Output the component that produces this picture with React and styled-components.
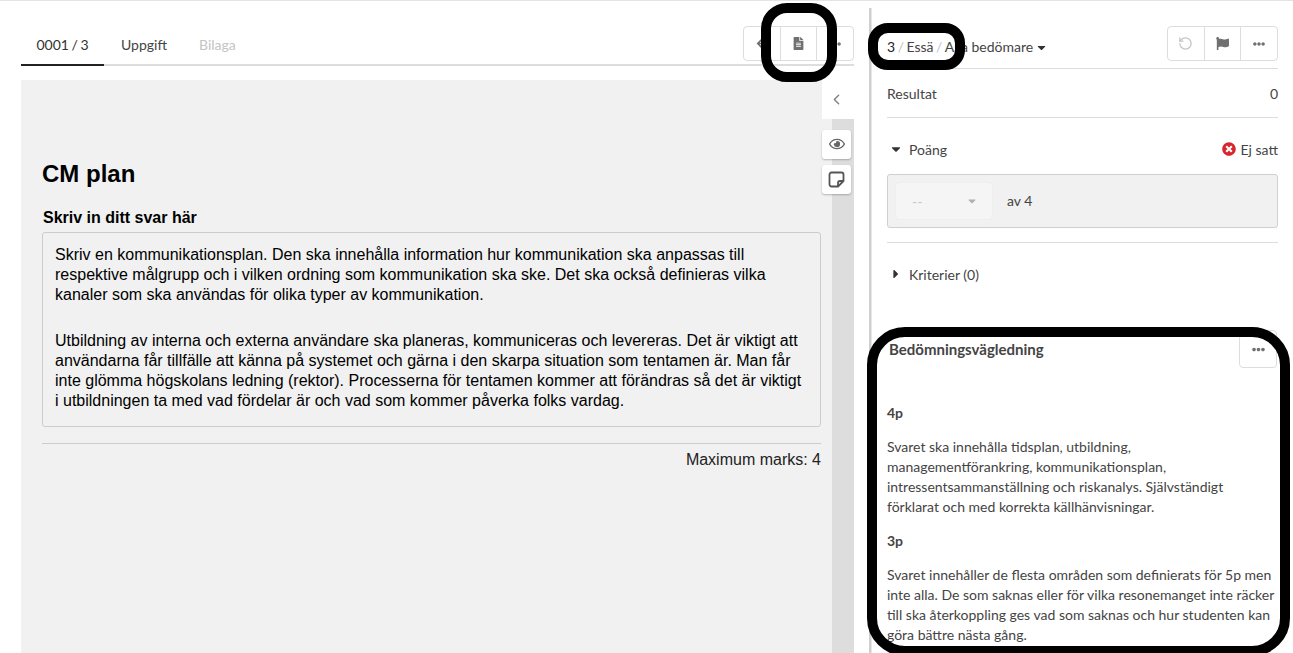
import styled, { createGlobalStyle } from "styled-components";
import {
  FaArrowLeft,
  FaCaretDown,
  FaCaretRight,
  FaEllipsisH,
  FaFileAlt,
  FaFlag,
  FaRegEye,
  FaTimesCircle,
} from "react-icons/fa";
import { ChevronLeft, RotateCcw } from "lucide-react";

const GlobalStyle = createGlobalStyle`
  html, body {
    margin: 0;
    padding: 0;
    background: #ffffff;
  }
  body {
    font-family: "Lato", "Liberation Sans", sans-serif;
    color: #444444;
    font-size: 14px;
  }
  * {
    box-sizing: border-box;
  }
`;

const Page = styled.div`
  position: relative;
  display: flex;
  width: 1293px;
  height: 653px;
  overflow: hidden;
  border-top: 1px solid #e4e4e4;
`;

// left side
const LeftColumn = styled.div`
  width: 833px;
  margin-left: 21px;
  flex-shrink: 0;
  display: flex;
  flex-direction: column;
`;

const TabBar = styled.div`
  display: flex;
  align-items: flex-start;
  justify-content: space-between;
  height: 65px;
  border-bottom: 2px solid #dddddd;
  padding-top: 25px;
`;

const Tabs = styled.div`
  display: flex;
`;

const Tab = styled.div`
  height: 40px;
  padding: 10px 16px 0 16px;
  line-height: 17px;
  font-size: 14px;
  white-space: nowrap;
  color: ${({ disabled }) => (disabled ? "#c4c4c4" : "#444444")};
  ${({ active }) =>
    active
      ? `
    width: 83px;
    margin-right: 1px;
    padding: 10px 0 0 0;
    color: #333333;
    border-bottom: 2px solid #222222;
    text-align: center;
    word-spacing: -1px;
  `
      : ""}
`;

const BtnGroup = styled.div`
  display: flex;
  width: 111px;
  height: 35px;
  border: 1px solid #dddddd;
  border-radius: 4px;
  background: #ffffff;
`;

const GroupBtn = styled.div`
  flex: 1;
  display: flex;
  align-items: center;
  justify-content: center;
  color: ${({ light }) => (light ? "#c4c4c4" : "#707070")};
  font-size: ${({ size }) => size || 13}px;
  & + & {
    border-left: 1px solid #dddddd;
  }
`;

const Workspace = styled.div`
  position: relative;
  flex: 1;
  display: flex;
  margin-top: 14px;
`;

const Paper = styled.div`
  width: 811px;
  background: #f1f1f1;
  padding: 79px 11px 0 21px;
  font-family: "Liberation Sans", Arial, sans-serif;
  color: #000000;
`;

const Rail = styled.div`
  flex: 1;
  margin-top: 39px;
  background: #dddddd;
`;

const PaperTitle = styled.h1`
  margin: 0;
  font-size: 24px;
  line-height: 30px;
  font-weight: 700;
`;

const QuestionLabel = styled.div`
  margin-top: 19px;
  font-size: 16px;
  line-height: 20px;
  font-weight: 700;
  padding-left: 1px;
`;

const AnswerBox = styled.div`
  margin-top: 4px;
  height: 195px;
  padding: 12px 12px 0 12px;
  border: 1px solid #cccccc;
  border-radius: 3px;
  font-size: 16px;
  line-height: 20px;
  & p {
    margin: 0 0 26px 0;
  }
`;

const MarksRow = styled.div`
  margin-top: 16px;
  padding-top: 6px;
  border-top: 1px solid #cccccc;
  text-align: right;
  font-size: 16px;
  line-height: 20px;
  color: #222222;
`;

const SideTab = styled.div`
  position: absolute;
  top: 0;
  left: 801px;
  width: 32px;
  height: 39px;
  background: #ffffff;
  color: #808080;
  display: flex;
  align-items: center;
  justify-content: center;
  padding-right: 3px;
`;

const FloatBtn = styled.div`
  position: absolute;
  left: 801px;
  top: ${({ top }) => top}px;
  width: 29px;
  height: 29px;
  background: #ffffff;
  border-radius: 3px;
  box-shadow: 0 1px 2px rgba(0, 0, 0, 0.25);
  color: #666666;
  display: flex;
  align-items: center;
  justify-content: center;
  font-size: 16px;
  padding-bottom: ${({ lift }) => lift || 0}px;
`;

const Divider = styled.div`
  width: 3px;
  margin: 7px 15px 0 15px;
  flex-shrink: 0;
  background: #cfcfcf;
  border-right: 1px solid #e6e6e6;
`;

// right side
const RightColumn = styled.div`
  width: 391px;
  flex-shrink: 0;
  display: flex;
  flex-direction: column;
  & > * {
    flex-shrink: 0;
  }
`;

const RightHeader = styled.div`
  height: 68px;
  padding-top: 25px;
  display: flex;
  justify-content: space-between;
  align-items: flex-start;
  border-bottom: 1px solid #dddddd;
`;

const Crumbs = styled.div`
  margin-top: 12px;
  font-size: 14px;
  line-height: 18px;
  display: flex;
  align-items: center;
  color: #444444;
  & b {
    font-weight: 400;
    color: #222222;
  }
  & i {
    font-style: normal;
    color: #c4c4c4;
    margin: 0 2.5px;
  }
  & svg {
    margin-left: 2px;
    font-size: 13px;
    color: #333333;
  }
`;

const ResultRow = styled.div`
  height: 49px;
  display: flex;
  justify-content: space-between;
  align-items: center;
  border-bottom: 1px solid #dddddd;
  font-size: 14px;
`;

const PointsHead = styled.div`
  margin-top: 23px;
  height: 18px;
  padding-bottom: 2px;
  display: flex;
  justify-content: space-between;
  align-items: center;
  font-size: 14px;
`;

const Toggle = styled.div`
  display: flex;
  align-items: center;
  & svg {
    width: 12px;
    font-size: 14px;
    margin: 0 7px 0 3px;
    color: #333333;
  }
`;

const Status = styled.div`
  display: flex;
  align-items: center;
  gap: 5px;
  & svg {
    color: #d9262c;
    font-size: 14px;
  }
`;

const PointsBox = styled.div`
  margin-top: 15px;
  height: 54px;
  background: #f1f1f1;
  border: 1px solid #d0d0d0;
  border-radius: 3px;
  padding: 7px;
  display: flex;
  align-items: center;
  gap: 14px;
  font-size: 14px;
  & > span {
    margin-top: -2px;
  }
`;

const FakeSelect = styled.div`
  width: 98px;
  height: 38px;
  background: #f5f5f5;
  border: 1px solid #eeeeee;
  border-radius: 4px;
  display: flex;
  align-items: center;
  justify-content: space-between;
  padding: 0 14px 0 16px;
  color: #c8c8c8;
  & svg {
    font-size: 12px;
    color: #b0b0b0;
  }
`;

const SectionRule = styled.div`
  margin-top: 14px;
  border-top: 1px solid #dddddd;
`;

const CriteriaRow = styled(Toggle)`
  margin-top: 23px;
  height: 18px;
  padding-bottom: 2px;
  font-size: 14px;
`;

const GuideHead = styled.div`
  margin-top: 31px;
  display: flex;
  justify-content: space-between;
  align-items: flex-start;
  height: 60px;
`;

const GuideTitle = styled.div`
  margin: 25px 0 0 2px;
  line-height: 18px;
  font-size: 15px;
  font-weight: 700;
  color: #444444;
`;

const GuideBtn = styled.div`
  width: 38px;
  height: 38px;
  margin: 15px 1px 0 0;
  border: 1px solid #dddddd;
  border-radius: 4px;
  display: flex;
  align-items: center;
  justify-content: center;
  color: #707070;
  font-size: 13px;
`;

const GuideBody = styled.div`
  margin-top: 28px;
  font-size: 14px;
  line-height: 20px;
  color: #444444;
  & h4 {
    margin: 0;
    font-size: 14px;
    line-height: 20px;
    font-weight: 700;
  }
  & p {
    margin: 14px 0;
  }
`;

// black rings drawn on top of the screenshot
const Ring = styled.div`
  position: absolute;
  left: ${({ x }) => x}px;
  top: ${({ y }) => y}px;
  width: ${({ w }) => w}px;
  height: ${({ h }) => h}px;
  border: 10px solid #000000;
  border-radius: ${({ r }) => r}px;
  pointer-events: none;
`;

const NoteIcon = () => (
  <svg width="17" height="17" viewBox="0 0 17 17" fill="none" stroke="#555555" strokeWidth="1.8">
    <path d="M10 15.5H3.5a2 2 0 0 1-2-2v-10a2 2 0 0 1 2-2h10a2 2 0 0 1 2 2V10Z" strokeLinejoin="round" />
    <path d="M15.5 10H12a2 2 0 0 0-2 2v3.5" strokeLinejoin="round" />
  </svg>
);

const App = () => {
  return (
    <Page>
      <GlobalStyle />
      <LeftColumn>
        <TabBar>
          <Tabs>
            <Tab active>0001 / 3</Tab>
            <Tab>Uppgift</Tab>
            <Tab disabled>Bilaga</Tab>
          </Tabs>
          <BtnGroup>
            <GroupBtn size={11}><FaArrowLeft /></GroupBtn>
            <GroupBtn><FaFileAlt /></GroupBtn>
            <GroupBtn size={12}><FaEllipsisH /></GroupBtn>
          </BtnGroup>
        </TabBar>
        <Workspace>
          <Paper>
            <PaperTitle>CM plan</PaperTitle>
            <QuestionLabel>Skriv in ditt svar här</QuestionLabel>
            <AnswerBox>
              <p>
                Skriv en kommunikationsplan. Den ska innehålla information hur kommunikation ska anpassas till
                respektive målgrupp och i vilken ordning som kommunikation ska ske. Det ska också definieras vilka
                kanaler som ska användas för olika typer av kommunikation.
              </p>
              <p>
                Utbildning av interna och externa användare ska planeras, kommuniceras och levereras. Det är viktigt att
                användarna får tillfälle att känna på systemet och gärna i den skarpa situation som tentamen är. Man får
                inte glömma högskolans ledning (rektor). Processerna för tentamen kommer att förändras så det är viktigt
                i utbildningen ta med vad fördelar är och vad som kommer påverka folks vardag.
              </p>
            </AnswerBox>
            <MarksRow>Maximum marks: 4</MarksRow>
          </Paper>
          <Rail />
          <SideTab><ChevronLeft size={17} strokeWidth={2} /></SideTab>
          <FloatBtn top={50} lift={2}><FaRegEye /></FloatBtn>
          <FloatBtn top={85}><NoteIcon /></FloatBtn>
        </Workspace>
      </LeftColumn>
      <Divider />
      <RightColumn>
        <RightHeader>
          <Crumbs>
            <b>3</b><i>/</i>Essä<i>/</i>Alla bedömare <FaCaretDown />
          </Crumbs>
          <BtnGroup>
            <GroupBtn light><RotateCcw size={15} strokeWidth={2} /></GroupBtn>
            <GroupBtn><FaFlag /></GroupBtn>
            <GroupBtn size={12}><FaEllipsisH /></GroupBtn>
          </BtnGroup>
        </RightHeader>
        <ResultRow>
          <span>Resultat</span>
          <span>0</span>
        </ResultRow>
        <PointsHead>
          <Toggle><FaCaretDown />Poäng</Toggle>
          <Status><FaTimesCircle />Ej satt</Status>
        </PointsHead>
        <PointsBox>
          <FakeSelect>
            <span>--</span>
            <FaCaretDown />
          </FakeSelect>
          <span>av 4</span>
        </PointsBox>
        <SectionRule />
        <CriteriaRow><FaCaretRight />Kriterier (0)</CriteriaRow>
        <GuideHead>
          <GuideTitle>Bedömningsvägledning</GuideTitle>
          <GuideBtn><FaEllipsisH /></GuideBtn>
        </GuideHead>
        <GuideBody>
          <h4>4p</h4>
          <p>
            Svaret ska innehålla tidsplan, utbildning,
            <br />
            managementförankring, kommunikationsplan,
            <br />
            intressentsammanställning och riskanalys. Självständigt
            <br />
            förklarat och med korrekta källhänvisningar.
          </p>
          <h4>3p</h4>
          <p>
            Svaret innehåller de flesta områden som definierats för 5p men
            <br />
            inte alla. De som saknas eller för vilka resonemanget inte räcker
            <br />
            till ska återkoppling ges vad som saknas och hur studenten kan
            <br />
            göra bättre nästa gång.
          </p>
        </GuideBody>
      </RightColumn>
      <Ring x={761} y={2} w={76} h={79} r={26} />
      <Ring x={868} y={22} w={97} h={47} r={20} />
      <Ring x={867} y={326} w={423} h={329} r={38} />
    </Page>
  );
};

export default App;
